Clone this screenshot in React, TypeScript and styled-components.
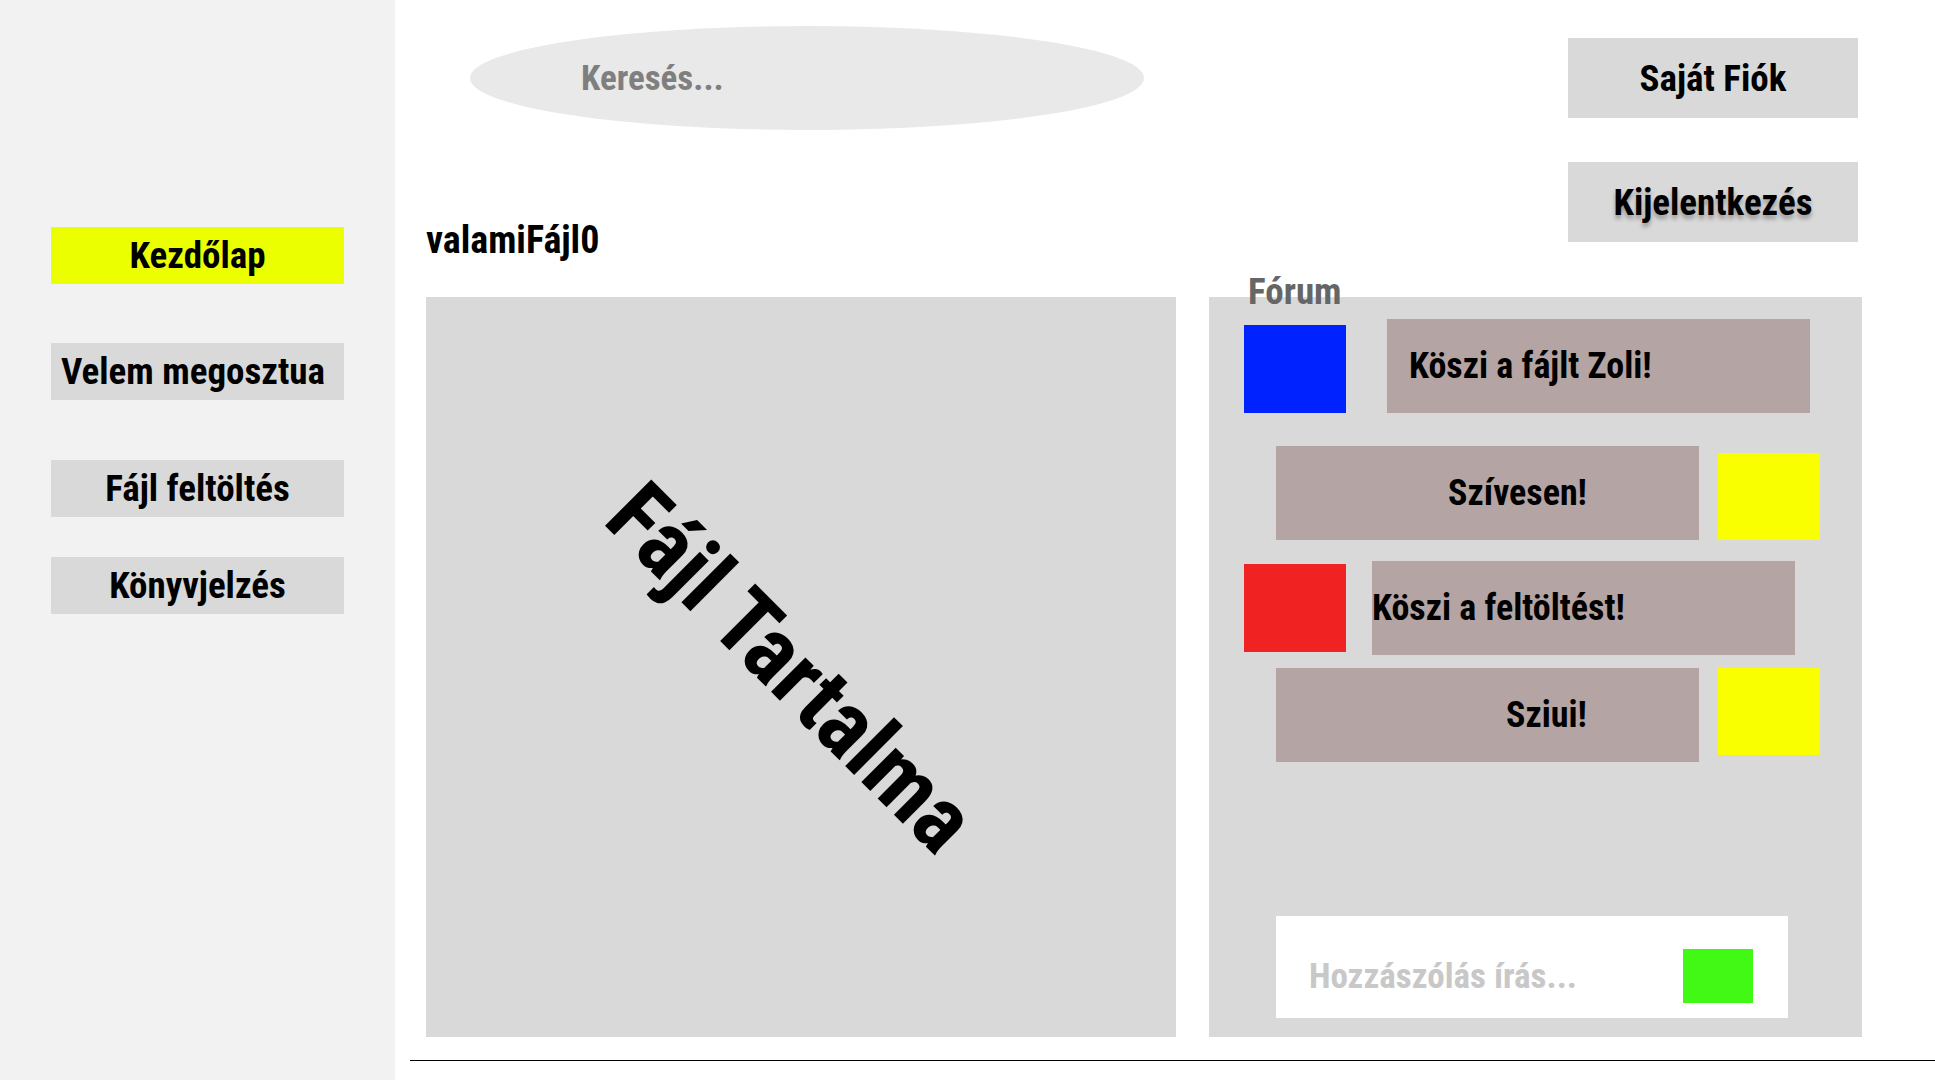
import styled, { createGlobalStyle } from 'styled-components';

const font = `"Roboto Condensed", "Open Sans Condensed", "Noto Sans Condensed", "DejaVu Sans Condensed", sans-serif`;

const GlobalStyle = createGlobalStyle`
	html, body {
		margin: 0;
		padding: 0;
		background: #fff;
		font-family: ${font};
	}
	* {
		box-sizing: border-box;
	}
`;

const Page = styled.div`
	display: flex;
	width: 1935px;
	height: 1080px;
	overflow: hidden;
`;

const Sidebar = styled.nav`
	width: 395px;
	flex-shrink: 0;
	height: 100%;
	background: #f2f2f2;
	display: flex;
	flex-direction: column;
	padding: 227px 0 0 51px;
`;

const NavButton = styled.div<{ $active?: boolean; $top?: number; $left?: boolean }>`
	width: 293px;
	height: 57px;
	margin-top: ${(p) => p.$top ?? 0}px;
	padding-left: ${(p) => (p.$left ? '10px' : '0')};
	background: ${(p) => (p.$active ? '#ebff00' : '#d9d9d9')};
	display: flex;
	align-items: center;
	justify-content: ${(p) => (p.$left ? 'flex-start' : 'center')};
	font: 700 37px ${font};
	color: #000;
	white-space: nowrap;
	cursor: pointer;
`;

const Main = styled.main`
	flex: 1;
	display: flex;
	flex-direction: column;
`;

const Grid = styled.div`
	display: grid;
	grid-template-columns: 750px 653px;
	column-gap: 33px;
	padding-left: 31px;
`;

const TopLeft = styled.div`
	display: flex;
	flex-direction: column;
	padding: 26px 0 38px 0;
`;

const Search = styled.input`
	width: 674px;
	height: 104px;
	margin-left: 44px;
	border: none;
	border-radius: 50%;
	background: #e9e9e9;
	padding: 0 0 0 111px;
	font: 700 35px ${font};
	color: #333;
	outline: none;

	&::placeholder {
		color: #7f7f7f;
		opacity: 1;
	}
`;

const FileTitle = styled.h1`
	margin: 91px 0 0 0;
	font: 700 38px/38px ${font};
	color: #000;
`;

const TopRight = styled.div`
	display: flex;
	flex-direction: column;
	align-items: flex-end;
	gap: 44px;
	padding: 38px 4px 0 0;
`;

const AccountButton = styled.div<{ $shadow?: boolean }>`
	width: 290px;
	height: 80px;
	background: #d9d9d9;
	display: flex;
	align-items: center;
	justify-content: center;
	font: 700 37px ${font};
	color: #000;
	text-shadow: ${(p) => (p.$shadow ? '0 4px 4px rgba(0, 0, 0, 0.3)' : 'none')};
	cursor: pointer;
`;

const FilePanel = styled.section`
	height: 740px;
	background: #d9d9d9;
	display: flex;
	align-items: center;
	justify-content: center;
	overflow: hidden;
`;

const FileContent = styled.div`
	font: 700 92px ${font};
	color: #000;
	white-space: nowrap;
	transform: translateX(-10px) rotate(45deg);
`;

const ForumPanel = styled.section`
	height: 740px;
	background: #d9d9d9;
	display: flex;
	flex-direction: column;
	padding-bottom: 19px;
`;

const ForumLabel = styled.h2`
	margin: -24px 0 0 39px;
	font: 700 37px/37px ${font};
	color: #666;
`;

const Row = styled.div<{ $indent: number; $gap: number; $align: string; $top: number }>`
	display: flex;
	padding-left: ${(p) => p.$indent}px;
	gap: ${(p) => p.$gap}px;
	align-items: ${(p) => p.$align};
	margin-top: ${(p) => p.$top}px;
`;

const Avatar = styled.div<{ $color: string; $h?: number }>`
	width: 102px;
	height: ${(p) => p.$h ?? 88}px;
	flex-shrink: 0;
	background: ${(p) => p.$color};
`;

const Message = styled.div<{ $right?: boolean; $pad: number }>`
	width: 423px;
	height: 94px;
	background: #b4a4a3;
	display: flex;
	align-items: center;
	justify-content: ${(p) => (p.$right ? 'flex-end' : 'flex-start')};
	padding: ${(p) => (p.$right ? `0 ${p.$pad}px 0 0` : `0 0 0 ${p.$pad}px`)};
	font: 700 36px ${font};
	color: #000;
	white-space: nowrap;
`;

const CommentBox = styled.div`
	margin: auto 0 0 67px;
	width: 512px;
	height: 102px;
	background: #fff;
	display: flex;
	align-items: center;
	padding: 18px 35px 0 33px;
`;

const CommentInput = styled.input`
	flex: 1;
	min-width: 0;
	border: none;
	background: transparent;
	outline: none;
	padding: 0;
	font: 700 35px ${font};
	color: #333;

	&::placeholder {
		color: #c8c8c8;
		opacity: 1;
	}
`;

const SendButton = styled.button`
	width: 70px;
	height: 54px;
	border: none;
	padding: 0;
	background: #41f915;
	cursor: pointer;
`;

const BottomLine = styled.hr`
	margin: 23px 0 0 15px;
	border: none;
	border-top: 1px solid #000;
`;

const messages = [
	{ text: 'Köszi a fájlt Zoli!', color: '#0022ff' },
	{ text: 'Szívesen!', color: '#faff00' },
	{ text: 'Köszi a feltöltést!', color: '#f02222' },
	{ text: 'Sziui!', color: '#faff00' },
];

export default function App() {
	return (
		<>
			<GlobalStyle />
			<Page>
				<Sidebar>
					<NavButton $active>Kezdőlap</NavButton>
					<NavButton $top={59} $left>
						Velem megosztua
					</NavButton>
					<NavButton $top={60}>Fájl feltöltés</NavButton>
					<NavButton $top={40}>Könyvjelzés</NavButton>
				</Sidebar>
				<Main>
					<Grid>
						<TopLeft>
							<Search placeholder='Keresés...' />
							<FileTitle>valamiFájl0</FileTitle>
						</TopLeft>
						<TopRight>
							<AccountButton>Saját Fiók</AccountButton>
							<AccountButton $shadow>Kijelentkezés</AccountButton>
						</TopRight>
						<FilePanel>
							<FileContent>Fájl Tartalma</FileContent>
						</FilePanel>
						<ForumPanel>
							<ForumLabel>Fórum</ForumLabel>
							<Row $indent={35} $gap={41} $align='flex-end' $top={9}>
								<Avatar $color={messages[0].color} />
								<Message $pad={22}>{messages[0].text}</Message>
							</Row>
							<Row $indent={67} $gap={19} $align='flex-end' $top={33}>
								<Message $right $pad={112}>
									{messages[1].text}
								</Message>
								<Avatar $color={messages[1].color} $h={87} />
							</Row>
							<Row $indent={35} $gap={26} $align='center' $top={21}>
								<Avatar $color={messages[2].color} />
								<Message $pad={0}>{messages[2].text}</Message>
							</Row>
							<Row $indent={67} $gap={19} $align='flex-start' $top={13}>
								<Message $right $pad={112}>
									{messages[3].text}
								</Message>
								<Avatar $color={messages[3].color} $h={87} />
							</Row>
							<CommentBox>
								<CommentInput placeholder='Hozzászólás írás...' />
								<SendButton aria-label='Küldés' />
							</CommentBox>
						</ForumPanel>
					</Grid>
					<BottomLine />
				</Main>
			</Page>
		</>
	);
}
